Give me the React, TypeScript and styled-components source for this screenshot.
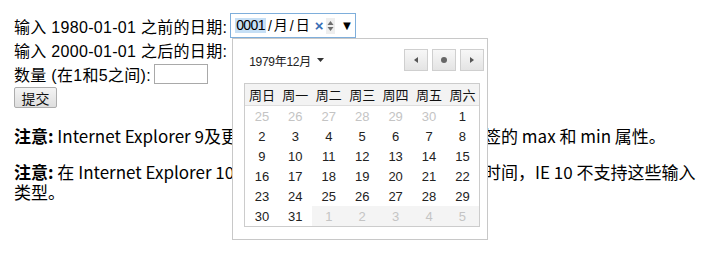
import React from 'react';
import styled, { createGlobalStyle } from 'styled-components';

const GlobalStyle = createGlobalStyle`
	html, body {
		margin: 0;
		background: #fff;
	}
	body {
		color: #000;
		font-family: 'Liberation Sans', 'Noto Sans CJK SC', sans-serif;
		font-size: 16px;
	}
`;

const Page = styled.div`
	box-sizing: border-box;
	min-height: 277px;
	padding: 13px 10px 0 14px;
	position: relative;
`;

const Form = styled.form`
	display: flex;
	flex-direction: column;
	align-items: flex-start;
	letter-spacing: 0.3px;
`;

const Row = styled.div<{ $h: number }>`
	display: flex;
	align-items: center;
	height: ${(p) => p.$h}px;
	white-space: nowrap;
`;

const DateWrap = styled.div`
	position: relative;
	margin-left: 3px;
	letter-spacing: 0;
`;

const DateField = styled.div`
	box-sizing: border-box;
	width: 126px;
	height: 25px;
	border: 1px solid #7eaedb;
	display: flex;
	align-items: center;
	padding: 0 0 0 4px;
`;

const Segment = styled.span<{ $active?: boolean }>`
	background: ${(p) => (p.$active ? '#c6dff5' : 'transparent')};
	font-size: 14px;
	line-height: 15px;
	letter-spacing: ${(p) => (p.$active ? '-0.6px' : '0')};
	padding: ${(p) => (p.$active ? '0 1px 0 1px' : '0')};
	flex-shrink: 0;
`;

const Sep = styled.span`
	margin: 0 2px;
	font-size: 14px;
	flex-shrink: 0;
`;

const Clear = styled.span`
	color: #3a6eb5;
	font-weight: bold;
	font-size: 15px;
	margin-left: 5px;
	flex-shrink: 0;
`;

const Spinner = styled.svg`
	margin-left: 3px;
	flex-shrink: 0;
`;

const Drop = styled.span`
	margin-left: 5px;
	font-size: 13px;
	flex-shrink: 0;
`;

const Popup = styled.div`
	position: absolute;
	left: 2px;
	top: 25px;
	width: 256px;
	height: 202px;
	box-sizing: border-box;
	border: 1px solid #c8c8c8;
	background: #fff;
	padding: 10px 6px 0 11px;
	z-index: 2;
`;

const PopHead = styled.div`
	display: flex;
	align-items: center;
	justify-content: space-between;
	height: 22px;
	padding-left: 5px;
	margin-right: -3px;
	margin-bottom: 12px;
`;

const MonthLabel = styled.span`
	font-size: 12px;
	color: #222;
	letter-spacing: -0.3px;
	display: flex;
	align-items: center;
	gap: 6px;
`;

const NavGroup = styled.div`
	display: flex;
	gap: 4px;
`;

const NavBtn = styled.div`
	width: 24px;
	height: 22px;
	box-sizing: border-box;
	border: 1px solid #cfcfcf;
	background: linear-gradient(#f7f7f7, #e4e4e4);
	display: flex;
	align-items: center;
	justify-content: center;
`;

const Grid = styled.div`
	width: 236px;
	box-sizing: border-box;
	border: 1px solid #cccccc;
	display: grid;
	grid-template-columns: repeat(7, 1fr);
`;

const HeadCell = styled.div`
	height: 21px;
	background: #f3f3f3;
	border-bottom: 1px solid #dedede;
	display: flex;
	align-items: center;
	justify-content: center;
	font-size: 13px;
	color: #111;
`;

const DayCell = styled.div<{ $muted?: boolean; $shade?: boolean }>`
	height: 20px;
	display: flex;
	align-items: center;
	justify-content: center;
	font-size: 13px;
	color: ${(p) => (p.$muted ? '#c4c4c4' : '#222')};
	background: ${(p) => (p.$shade ? '#f4f4f4' : 'transparent')};
`;

const Label = styled.span``;

const NumberInput = styled.div`
	box-sizing: border-box;
	width: 54px;
	height: 20px;
	border: 1px solid #a9a9a9;
	margin-left: 3px;
`;

const Submit = styled.button`
	box-sizing: border-box;
	width: 43px;
	height: 21px;
	border: 1px solid #adadad;
	border-radius: 2px;
	background: linear-gradient(#f4f4f4, #dedede);
	font-family: 'Noto Sans CJK SC', sans-serif;
	font-size: 14px;
	padding: 0;
	margin-top: 1px;
	color: #111;
`;

const Note = styled.p<{ $first?: boolean }>`
	margin: ${(p) => (p.$first ? '18px' : '16px')} 0 0;
	line-height: 20px;
	font-family: 'Noto Sans CJK SC', sans-serif;
	font-size: 17px;
`;

const weekdays = ['周日', '周一', '周二', '周三', '周四', '周五', '周六'];

const days: { n: number; muted?: boolean; shade?: boolean }[] = [
	...[25, 26, 27, 28, 29, 30].map((n) => ({ n, muted: true })),
	...Array.from({ length: 31 }, (_, i) => ({ n: i + 1 })),
	...[1, 2, 3, 4, 5].map((n) => ({ n, muted: true, shade: true })),
];

const App = () => {
	return (
		<Page>
			<GlobalStyle />
			<Form>
				<Row $h={25}>
					<Label>输入 1980-01-01 之前的日期:</Label>
					<DateWrap>
						<DateField>
							<Segment $active>0001</Segment>
							<Sep>/</Sep>
							<Segment>月</Segment>
							<Sep>/</Sep>
							<Segment>日</Segment>
							<Clear>×</Clear>
							<Spinner width="9" height="16" viewBox="0 0 9 16">
								<rect x="0" y="0" width="9" height="16" fill="#eeeeee" />
								<path d="M1.5 7 L4.5 3 L7.5 7 Z" fill="#6d6d6d" />
								<path d="M1.5 9 L4.5 13 L7.5 9 Z" fill="#6d6d6d" />
							</Spinner>
							<Drop>▼</Drop>
						</DateField>
						<Popup>
							<PopHead>
								<MonthLabel>
									1979年12月
									<svg width="7" height="4" viewBox="0 0 7 4">
										<path d="M0 0 L7 0 L3.5 4 Z" fill="#333" />
									</svg>
								</MonthLabel>
								<NavGroup>
									<NavBtn>
										<svg width="4" height="6" viewBox="0 0 4 6">
											<path d="M4 0 L0 3 L4 6 Z" fill="#555" />
										</svg>
									</NavBtn>
									<NavBtn>
										<svg width="6" height="6" viewBox="0 0 6 6">
											<circle cx="3" cy="3" r="3" fill="#666" />
										</svg>
									</NavBtn>
									<NavBtn>
										<svg width="4" height="6" viewBox="0 0 4 6">
											<path d="M0 0 L4 3 L0 6 Z" fill="#555" />
										</svg>
									</NavBtn>
								</NavGroup>
							</PopHead>
							<Grid>
								{weekdays.map((w) => (
									<HeadCell key={w}>{w}</HeadCell>
								))}
								{days.map((d, i) => (
									<DayCell key={i} $muted={d.muted} $shade={d.shade}>
										{d.n}
									</DayCell>
								))}
							</Grid>
						</Popup>
					</DateWrap>
				</Row>
				<Row $h={23}>
					<Label>输入 2000-01-01 之后的日期:</Label>
				</Row>
				<Row $h={25}>
					<Label>数量 (在1和5之间):</Label>
					<NumberInput />
				</Row>
				<Submit type="button">提交</Submit>
			</Form>
			<Note $first>
				<b>注意:</b> Internet Explorer 9及更早IE版本,Firefox 不支持 input 标签的 max 和 min 属性。
			</Note>
			<Note>
				<b>注意:</b> 在 Internet Explorer 10中 max 和 min 属性不支持日期和时间，IE 10 不支持这些输入类型。
			</Note>
		</Page>
	);
};

export default App;
